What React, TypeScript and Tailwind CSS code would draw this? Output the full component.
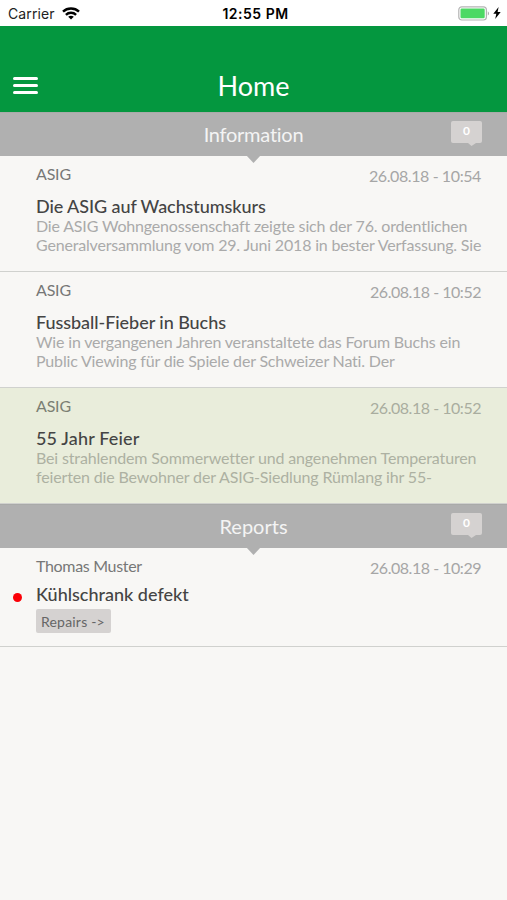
import React from 'react';
import clsx from 'clsx';

type Line = { text: string; tracking: string };

type Entry = {
  author: Line;
  date: Line;
  title: Line;
  body?: Line[];
  tag?: string;
  highlighted?: boolean;
  unread?: boolean;
};

const information: Entry[] = [
  {
    author: { text: 'ASIG', tracking: 'tracking-[-0.2px]' },
    date: { text: '26.08.18 - 10:54', tracking: 'tracking-[-0.4px]' },
    title: { text: 'Die ASIG auf Wachstumskurs', tracking: 'tracking-[-0.08px]' },
    body: [
      { text: 'Die ASIG Wohngenossenschaft zeigte sich der 76. ordentlichen', tracking: 'tracking-[-0.17px]' },
      { text: 'Generalversammlung vom 29. Juni 2018 in bester Verfassung. Sie', tracking: 'tracking-[-0.18px]' },
    ],
  },
  {
    author: { text: 'ASIG', tracking: 'tracking-[-0.2px]' },
    date: { text: '26.08.18 - 10:52', tracking: 'tracking-[-0.47px]' },
    title: { text: 'Fussball-Fieber in Buchs', tracking: 'tracking-[-0.05px]' },
    body: [
      { text: 'Wie in vergangenen Jahren veranstaltete das Forum Buchs ein', tracking: 'tracking-[-0.17px]' },
      { text: 'Public Viewing für die Spiele der Schweizer Nati. Der', tracking: 'tracking-[-0.18px]' },
    ],
  },
  {
    author: { text: 'ASIG', tracking: 'tracking-[-0.2px]' },
    date: { text: '26.08.18 - 10:52', tracking: 'tracking-[-0.47px]' },
    title: { text: '55 Jahr Feier', tracking: 'tracking-[0.15px]' },
    body: [
      { text: 'Bei strahlendem Sommerwetter und angenehmen Temperaturen', tracking: 'tracking-[-0.15px]' },
      { text: 'feierten die Bewohner der ASIG-Siedlung Rümlang ihr 55-', tracking: 'tracking-[-0.15px]' },
    ],
    highlighted: true,
  },
];

const reports: Entry[] = [
  {
    author: { text: 'Thomas Muster', tracking: 'tracking-[-0.32px]' },
    date: { text: '26.08.18 - 10:29', tracking: 'tracking-[-0.47px]' },
    title: { text: 'Kühlschrank defekt', tracking: 'tracking-[0px]' },
    tag: 'Repairs ->',
    unread: true,
  },
];

const StatusBar = () => (
  <div className="h-[26px] bg-white flex items-center justify-between pl-2 pr-[6px] text-black font-['Inter',sans-serif] relative">
    <div className="flex items-center gap-[7px]">
      <span className="text-[14px] leading-[26px] pt-px tracking-[0.1px] text-[#222222]">Carrier</span>
      <svg width="18" height="13" viewBox="0 0 18 13" fill="none" stroke="#000" strokeWidth="2.4">
        <path d="M1 4.6C5.4.4 12.6.4 17 4.6" />
        <path d="M3.9 7.8c2.8-2.7 7.4-2.7 10.2 0" />
        <path d="M9 12.6 6.2 9.8c1.5-1.5 4.1-1.5 5.6 0Z" fill="#000" stroke="none" />
      </svg>
    </div>
    <span className="absolute inset-x-0 text-center pt-px pl-1 text-[14px] leading-[26px] font-semibold tracking-[0.5px]">12:55 PM</span>
    <div className="flex items-center gap-[3px]">
      <svg width="32" height="15" viewBox="0 0 32 15">
        <rect x="0.8" y="0.8" width="27.6" height="13.2" rx="3" fill="#fff" stroke="#b4b4b4" strokeWidth="1.2" />
        <rect x="2.5" y="2.5" width="24.2" height="9.8" rx="1.2" fill="#4cd964" />
        <path d="M29.8 5.2c1.6.7 1.6 3.7 0 4.4Z" fill="#a9a9a9" />
      </svg>
      <svg width="8" height="12" viewBox="0 0 8 12">
        <path d="M5.6 0 .3 6.8h3L2.2 12 7.7 5.1H4.6Z" fill="#000" />
      </svg>
    </div>
  </div>
);

const SectionHeader = ({ title, count, tracking }: { title: string; count: number; tracking: string }) => (
  <div className="h-11 bg-[#b0b0b0] relative flex items-center justify-center border-t border-[#a9aaa9]">
    <h2 className={clsx('text-[20px] leading-6 text-[#f4f4f4] pb-[2px]', tracking)}>{title}</h2>
    <div className="absolute right-[25px] top-2 w-[31px] h-[22px] rounded-[2px] bg-[#d5d2d1] text-white text-[12px] leading-5 font-bold text-center">
      {count}
      <svg className="absolute left-[17px] top-[22px]" width="9" height="4" viewBox="0 0 9 4">
        <path d="M0 0h8L3.5 3Z" fill="#d5d2d1" />
      </svg>
    </div>
    <svg className="absolute left-[246px] top-[42px] z-10" width="15" height="8" viewBox="0 0 15 8">
      <path d="M0 0h15L7.5 8Z" fill="#b0b0b0" />
    </svg>
  </div>
);

const EntryRow = ({ entry }: { entry: Entry }) => (
  <div
    className={clsx(
      'relative pl-9 pr-[26px] pt-2 border-b border-[#d0d1ce]',
      entry.tag ? 'h-[99px]' : 'h-[116px]',
      entry.highlighted && 'bg-[#e9eddb]'
    )}
  >
    <div className="flex justify-between text-[16px] leading-5">
      <span className={clsx(entry.highlighted ? 'text-[#7b7f73]' : 'text-[#777777]', entry.author.tracking)}>{entry.author.text}</span>
      <span className={clsx('pt-[2px]', entry.highlighted ? 'text-[#a9ad9f]' : 'text-[#a6a6a6]', entry.date.tracking)}>{entry.date.text}</span>
    </div>
    <h3
      className={clsx(
        'text-[18px] leading-[22px] font-medium text-[#444444]',
        entry.tag ? 'mt-[5px]' : 'mt-[9px]',
        entry.title.tracking
      )}
    >
      {entry.title.text}
    </h3>
    {entry.unread && <span className="absolute left-[13px] top-[45px] w-[9px] h-[9px] rounded-full bg-[#fb0007]" />}
    {entry.body?.map((line) => (
      <p
        key={line.text}
        className={clsx('text-[16px] leading-[18.6px] whitespace-nowrap', entry.highlighted ? 'text-[#adb1a2]' : 'text-[#aaaaaa]', line.tracking)}
      >
        {line.text}
      </p>
    ))}
    {entry.tag && (
      <span className="mt-[4px] block w-[75px] h-6 rounded-[2px] bg-[#d5d2d1] pl-[5px] text-[14px] leading-[25px] tracking-[0.2px] text-[#666666] whitespace-nowrap">
        {entry.tag}
      </span>
    )}
  </div>
);

export default function App() {
  return (
    <div className="w-full h-[900px] bg-[#f8f7f5] overflow-hidden font-['Lato',sans-serif]">
      <StatusBar />
      <header className="h-[86px] bg-[#04973f] relative flex items-end justify-center pb-[10px]">
        <button className="absolute left-[13px] top-[51px] flex flex-col gap-1" aria-label="Menu">
          <span className="w-[25px] h-[3px] rounded-full bg-white" />
          <span className="w-[25px] h-[3px] rounded-full bg-white" />
          <span className="w-[25px] h-[3px] rounded-full bg-white" />
        </button>
        <h1 className="text-[27px] leading-8 text-white">Home</h1>
      </header>
      <SectionHeader title="Information" count={0} tracking="tracking-[-0.25px]" />
      {information.map((entry) => (
        <EntryRow key={entry.title.text} entry={entry} />
      ))}
      <SectionHeader title="Reports" count={0} tracking="tracking-[0px]" />
      {reports.map((entry) => (
        <EntryRow key={entry.title.text} entry={entry} />
      ))}
    </div>
  );
}
